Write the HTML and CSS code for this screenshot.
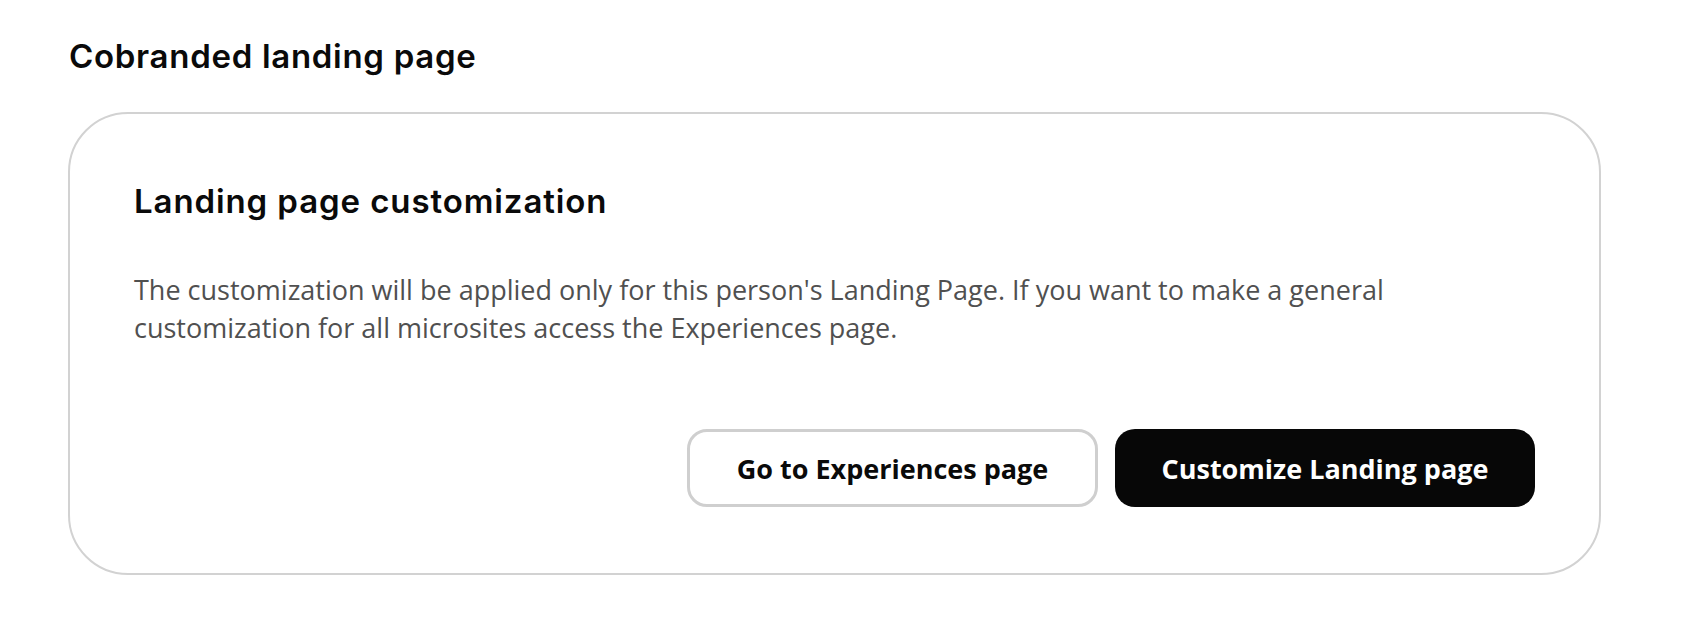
FILE: index.html
```html
<!DOCTYPE html>
<html lang="en">
<head>
<meta charset="utf-8">
<title>Cobranded landing page</title>
<link rel="stylesheet" href="styles.css">
</head>
<body>
<main class="page">
  <h1 class="page-title">Cobranded landing page</h1>
  <section class="card">
    <h2 class="card-title">Landing page customization</h2>
    <p class="card-text">The customization will be applied only for this person's Landing Page. If you want to make a general customization for all microsites access the Experiences page.</p>
    <div class="actions">
      <button class="btn btn-outline" type="button">Go to Experiences page</button>
      <button class="btn btn-solid" type="button">Customize Landing page</button>
    </div>
  </section>
</main>
</body>
</html>
```

FILE: styles.css
```css
* { box-sizing: border-box; }
html, body { margin: 0; padding: 0; background: #ffffff; }
body { font-family: "Open Sans", "Noto Sans", sans-serif; color: #111; }

.page {
  width: 1601px;
  padding: 36px 0 0 68px;
}

.page-title {
  margin: 0 0 36px 1px;
  font-family: Inter, "Liberation Sans", sans-serif;
  font-weight: 600;
  font-size: 33px;
  line-height: 40px;
  letter-spacing: 0.7px;
  color: #0a0a0a;
}

.card {
  border: 2px solid #d2d2d2;
  border-radius: 60px;
  padding: 67px 64px 66px 64px;
}

.card-title {
  margin: 0;
  font-family: Inter, "Liberation Sans", sans-serif;
  font-weight: 600;
  font-size: 33px;
  line-height: 40px;
  letter-spacing: 0.9px;
  color: #0a0a0a;
}

.card-text {
  margin: 50px 0 0 0;
  max-width: 1300px;
  font-family: "Open Sans", "Noto Sans", sans-serif;
  font-size: 27px;
  line-height: 38px;
  color: #505050;
}

.actions {
  display: flex;
  justify-content: flex-end;
  gap: 17px;
  margin-top: 82px;
}

.btn {
  height: 78px;
  border-radius: 20px;
  font-family: "Open Sans", "Noto Sans", sans-serif;
  font-weight: 700;
  font-size: 27px;
  cursor: pointer;
}

.btn-outline {
  width: 411px;
  background: #ffffff;
  border: 3px solid #cfcfcf;
  color: #0a0a0a;
}

.btn-solid {
  width: 420px;
  background: #070707;
  border: none;
  color: #ffffff;
}
```
